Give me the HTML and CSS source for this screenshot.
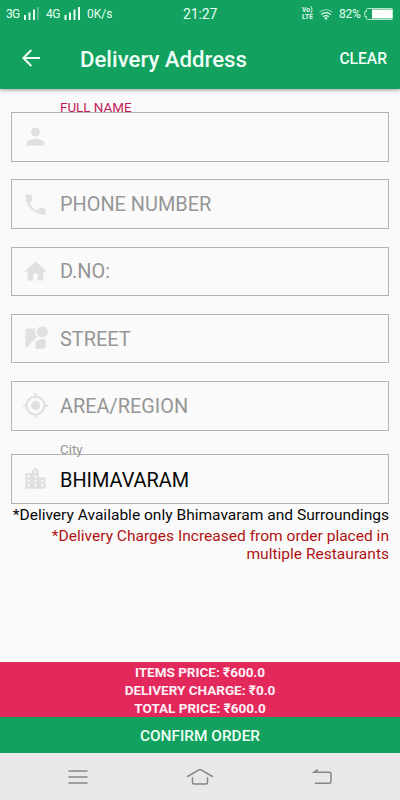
FILE: index.html
```html
<!DOCTYPE html>
<html lang="en">
<head>
<meta charset="utf-8">
<title>Delivery Address</title>
<link rel="stylesheet" href="styles.css">
</head>
<body>
<div class="screen">
  <header class="top">
    <div class="status">
      <span class="net">3G</span>
      <svg class="bars" viewBox="0 0 17 13" width="17" height="13"><path d="M1 8h2v5H1zM5.500 5.500h2V13h-2zM10 2.500h2V13h-2z"/><path opacity=".3" d="M14 0h2v13h-2z"/></svg>
      <span class="net net-2">4G</span>
      <svg class="bars" viewBox="0 0 17 13" width="17" height="13"><path d="M.5 8h2v5h-2zM5 5.500h2V13H5zM9.500 2.500h2V13h-2zM14 0h2v13h-2z"/></svg>
      <span class="speed">0K/s</span>
      <span class="clock">21:27</span>
      <span class="volte"><span>Vo)</span><span>LTE</span></span>
      <svg class="wifi" viewBox="0 0 14 11" width="14" height="11" fill="none" stroke="#e6fff2" stroke-width="1.200"><path opacity=".5" d="M.5 3.400Q7-2 13.500 3.400"/><path d="M2.200 5.600Q7 1.600 11.800 5.600M4.200 7.800Q7 5.500 9.800 7.800"/><path fill="#e6fff2" stroke="none" d="M5.200 9Q7 7.600 8.800 9L7 11z"/></svg>
      <span class="percent">82%</span>
      <svg class="battery" viewBox="0 0 29 12" width="29" height="12"><path fill="none" stroke="#b9e8cf" d="M2.500 3.500V1.500Q2.500.5 3.500.5h24q1 0 1 1v9q0 1-1 1h-24q-1 0-1-1v-2"/><path fill="none" stroke="#b9e8cf" d="M2.500 3.500H.8v5h1.700"/><path fill="#fff" d="M8 1.500h20v9H8z"/></svg>
    </div>
    <div class="appbar">
      <svg class="back" viewBox="0 0 18 18" width="18" height="18" fill="none" stroke="#effff7" stroke-width="2"><path d="M18 9H1.500M9.300 1L1.400 9l7.900 8"/></svg>
      <h1 class="title">Delivery Address</h1>
      <span class="clear">CLEAR</span>
    </div>
  </header>

  <main class="form">
    <div class="field">
      <span class="float accent">FULL NAME</span>
      <svg class="icon" viewBox="0 0 24 24"><path d="M12 12c2.210 0 4-1.790 4-4s-1.790-4-4-4-4 1.790-4 4 1.790 4 4 4zm0 2c-2.670 0-8 1.340-8 4v2h16v-2c0-2.660-5.330-4-8-4z"/></svg>
    </div>
    <div class="field">
      <svg class="icon" viewBox="0 0 24 24"><path d="M6.620 10.790c1.440 2.830 3.760 5.140 6.590 6.590l2.200-2.200c.27-.27.67-.36 1.020-.24 1.120.37 2.330.57 3.570.57.55 0 1 .45 1 1V20c0 .55-.45 1-1 1-9.390 0-17-7.610-17-17 0-.55.45-1 1-1h3.500c.55 0 1 .45 1 1 0 1.250.2 2.450.57 3.570.11.35.03.74-.25 1.020l-2.200 2.200z"/></svg>
      <span class="hint">PHONE NUMBER</span>
    </div>
    <div class="field">
      <svg class="icon" viewBox="0 0 24 24"><path d="M10 20v-6h4v6h5v-8h3L12 3 2 12h3v8z"/></svg>
      <span class="hint">D.NO:</span>
    </div>
    <div class="field">
      <svg class="icon" viewBox="0 0 24 24"><path d="M12.560 14.330c-.34.27-.56.7-.56 1.170V21h7c1.100 0 2-.9 2-2v-5.980c-.94-.33-1.950-.52-3-.52-2.030 0-3.930.7-5.440 1.830z"/><circle cx="18" cy="6" r="5"/><path d="M11.500 6c0-1.080.27-2.100.74-3H5c-1.100 0-2 .9-2 2v14c0 .55.23 1.050.59 1.410l9.820-9.820C12.230 9.420 11.500 7.800 11.500 6z"/></svg>
      <span class="hint">STREET</span>
    </div>
    <div class="field">
      <svg class="icon" viewBox="0 0 24 24"><circle cx="12" cy="12" r="4"/><path fill="none" stroke="#e0e0e0" stroke-width="2" d="M12 4a8 8 0 1 0 0 16 8 8 0 1 0 0-16zM12 1v3M12 20v3M1 12h3M20 12h3"/></svg>
      <span class="hint">AREA/REGION</span>
    </div>
    <div class="field city">
      <span class="float">City</span>
      <svg class="icon" viewBox="0 0 24 24"><path d="M15 11V5l-3-3-3 3v2H3v14h18V11h-6zm-8 8H5v-2h2v2zm0-4H5v-2h2v2zm0-4H5V9h2v2zm6 8h-2v-2h2v2zm0-4h-2v-2h2v2zm0-4h-2V9h2v2zm0-4h-2V5h2v2zm6 12h-2v-2h2v2zm0-4h-2v-2h2v2z"/></svg>
      <span class="hint value">BHIMAVARAM</span>
    </div>
    <p class="note">*Delivery Available only Bhimavaram and Surroundings</p>
    <p class="note warn">*Delivery Charges Increased from order placed in<br>multiple Restaurants</p>
  </main>

  <section class="totals">
    <div>ITEMS PRICE: ₹600.0</div>
    <div>DELIVERY CHARGE: ₹0.0</div>
    <div>TOTAL PRICE: ₹600.0</div>
  </section>
  <div class="confirm">CONFIRM ORDER</div>
  <nav class="nav">
    <svg viewBox="0 0 26 18" width="26" height="18"><path d="M4 3h18M4 9h18M4 15h18"/></svg>
    <svg viewBox="0 0 26 18" width="26" height="18"><path d="M.5 8.500L11 2.400q2-1.200 4 0L25.500 8.500M5.500 10v4.500q0 1.500 1.500 1.500h12q1.500 0 1.500-1.500V10"/></svg>
    <svg viewBox="0 0 26 18" width="26" height="18"><path d="M8.500 2L5 4.300h15q2 0 2 2v7q0 2-2 2H6.500"/></svg>
  </nav>
</div>
</body>
</html>
```
FILE: styles.css
```css
* { box-sizing: border-box; }
body {
  margin: 0;
  font-family: Roboto, "Noto Sans", sans-serif;
  background: #fafafa;
}
.screen {
  width: 400px;
  height: 800px;
  display: flex;
  flex-direction: column;
  overflow: hidden;
}
.top {
  flex: none;
  height: 89px;
  background: #12a15f;
  color: #effff7;
  box-shadow: 0 1px 4px rgba(0, 0, 0, .4);
}
.status {
  height: 28px;
  display: flex;
  align-items: center;
  padding-left: 6px;
  font-size: 12px;
  line-height: 28px;
  white-space: nowrap;
  color: #e6fff2;
}
.status > * { flex: none; }
.net { width: 17px; letter-spacing: -.8px; }
.net-2 { width: 18px; margin-left: 6px; letter-spacing: -.4px; }
.bars { fill: #e6fff2; margin-top: -1px; }
.speed { width: 96px; margin-left: 6px; }
.clock { width: 119px; font-size: 14px; letter-spacing: -.1px; }
.volte {
  width: 12px;
  display: flex;
  flex-direction: column;
  font-size: 6.5px;
  font-weight: 700;
  line-height: 7px;
  letter-spacing: .2px;
}
.wifi { margin-left: 5px; }
.percent { width: 22px; margin-left: 6px; letter-spacing: -.3px; }
.battery { margin: -1px 0 0 3px; }
.appbar {
  height: 61px;
  display: flex;
  align-items: center;
  padding: 0 13px 0 22px;
}
.back { margin-top: -2px; }
.title {
  flex: 1;
  margin: 1px 0 0 40px;
  font-size: 22.2px;
  font-weight: 500;
  line-height: 61px;
}
.clear { font-size: 15.6px; font-weight: 500; }
.form {
  flex: 1;
  padding: 23px 11px 0;
}
.field {
  position: relative;
  height: 49.5px;
  margin-bottom: 17.75px;
  padding-left: 10px;
  display: flex;
  align-items: center;
  border: 1px solid #b3b3b3;
}
.field.city { margin: 23.5px 0 0; }
.icon { width: 27px; height: 27px; fill: #e0e0e0; flex: none; }
.hint {
  margin-left: 11px;
  padding-top: 2px;
  font-size: 19.9px;
  line-height: 24px;
  color: #969696;
}
.value { color: #080808; padding-top: 4px; }
.float {
  position: absolute;
  left: 48px;
  top: -13px;
  font-size: 13.4px;
  line-height: 16px;
  color: #969696;
}
.accent { color: #c2185b; }
.note {
  margin: 2px 0 0;
  font-size: 15.56px;
  line-height: 18px;
  text-align: right;
  white-space: nowrap;
  color: #080808;
}
.warn { margin-top: 3.5px; color: #b01212; }
.totals {
  flex: none;
  height: 55px;
  padding-top: 1px;
  background: #e3285c;
  color: #fff0f5;
  font-size: 13.5px;
  font-weight: 700;
  line-height: 18px;
  text-align: center;
}
.confirm {
  flex: none;
  height: 36px;
  background: #12a15f;
  color: #effff7;
  font-size: 15.4px;
  font-weight: 500;
  line-height: 38px;
  text-align: center;
}
.nav {
  flex: none;
  height: 47px;
  padding: 0 65px;
  display: flex;
  align-items: center;
  justify-content: space-between;
  background: #e8e8e8;
}
.nav svg { fill: none; stroke: #858585; stroke-width: 1.5; stroke-linecap: round; }
```
